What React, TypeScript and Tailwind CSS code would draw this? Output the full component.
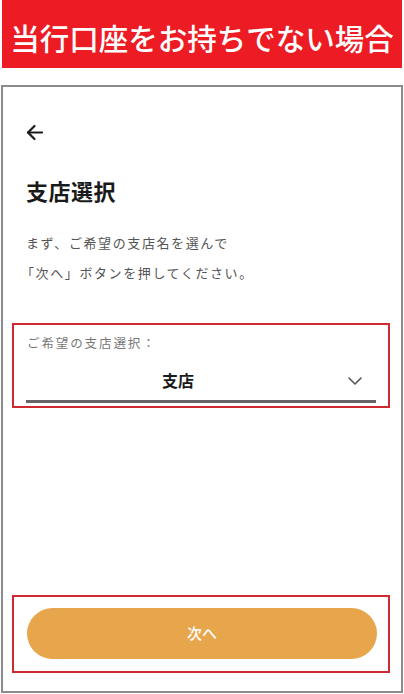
import React from 'react';

const jp = { fontFamily: '"Noto Sans CJK JP", "Noto Sans", sans-serif' };

const BackArrow = () => (
  <svg width="19" height="19" viewBox="0 0 19 19" fill="none" stroke="#1a1a1a" strokeWidth={2.2} strokeLinecap="round" strokeLinejoin="round">
    <path d="M17 9.5H3" />
    <path d="M9.5 3L3 9.5L9.5 16" />
  </svg>
);

const Chevron = () => (
  <svg width="16" height="10" viewBox="0 0 16 10" fill="none" stroke="#555" strokeWidth={1.6} strokeLinecap="round" strokeLinejoin="round">
    <path d="M2 2L8 8L14 2" />
  </svg>
);

const App: React.FC = () => {
  return (
    <div className="w-[404px] h-[694px] bg-white overflow-hidden" style={jp}>
      {/* banner */}
      <div className="ml-[2px] w-[400px] h-[68px] bg-[#ed1c24] flex items-center justify-center pt-[8px]">
        <span className="text-white text-[29.5px] font-medium leading-none whitespace-nowrap">当行口座をお持ちでない場合</span>
      </div>

      {/* phone frame */}
      <div className="mt-[17px] ml-[1px] w-[402px] h-[608px] border-2 border-[#8c8c8c] flex flex-col">
        <div className="mt-[36px] ml-[22px]">
          <BackArrow />
        </div>

        <h1 className="mt-[33px] ml-[23px] text-[22px] leading-[30px] font-bold text-[#1a1a1a] tracking-[0.5px]">支店選択</h1>

        <p className="mt-[23px] ml-[23px] text-[13px] leading-[30px] text-[#555] tracking-[1.6px]">
          まず、ご希望の支店名を選んで
          <br />
          <span className="-ml-[5px]">「次へ」ボタンを押してください。</span>
        </p>

        {/* branch select */}
        <div className="mt-[35px] ml-[9px] w-[378px] h-[85px] border-2 border-[#cf2a32] flex flex-col">
          <div className="mt-[8px] ml-[13px] text-[12.5px] leading-[20px] text-[#777] tracking-[1.9px]">ご希望の支店選択：</div>
          <div className="mt-[12px] ml-[12px] w-[350px] h-[30px] flex items-center">
            <div className="w-[304px] text-center text-[16px] font-bold text-[#1a1a1a] leading-none">支店</div>
            <div className="ml-[17px] flex items-center pt-[2px]">
              <Chevron />
            </div>
          </div>
          <div className="mt-[5px] ml-[12px] w-[350px] h-[3px] bg-[#666]" />
        </div>

        {/* next button */}
        <div className="mt-auto mb-[18px] ml-[9px] w-[378px] h-[78px] border-2 border-[#cf2a32] flex flex-col">
          <button className="mt-[11px] ml-[13px] w-[350px] h-[51px] rounded-full bg-[#e8a64c] text-white text-[15px] font-medium flex items-center justify-center">
            次へ
          </button>
        </div>
      </div>
    </div>
  );
};

export default App;
